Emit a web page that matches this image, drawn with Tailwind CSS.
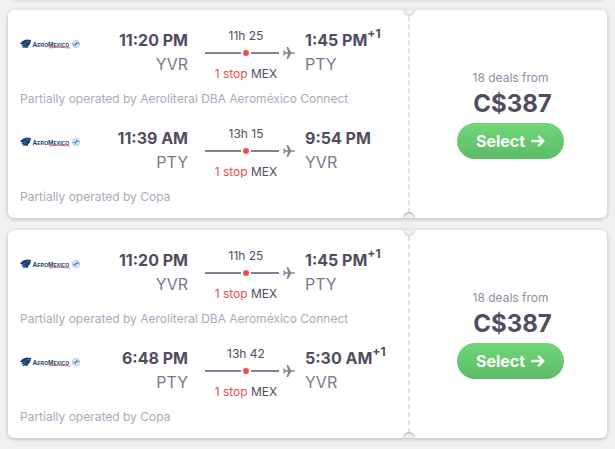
<!DOCTYPE html>
<html lang="en">
<head>
    <meta charset="UTF-8">
    <meta name="viewport" content="width=device-width, initial-scale=1.0">
    <title>Flight results</title>
    <script src="https://cdn.jsdelivr.net/npm/@tailwindcss/browser@4"></script>
</head>
<body class="bg-[#f1f1f3] px-2 pb-2.5 font-['Inter',sans-serif] text-[#524c61]">
    <!-- Shared icons -->
    <svg class="hidden" aria-hidden="true">
        <symbol id="aeromexico" viewBox="0 0 60 12">
            <path d="M0 5.500 2 3.500 4 2.200 7 1.600 11 2 10.600 4.600 9.600 6.800 8.200 8 7.600 10 5 9.600 2.400 10 3.400 8.600 1.200 8 2.600 6.800Z" fill="#173f73"/>
            <path d="M2 7 5.500 5.200M3 8.800 6 6.800M6 4 9.800 3.400" stroke="#6f94bd" stroke-width=".6" fill="none"/>
            <text x="12.500" y="8.500" fill="#173f73" font-family="Liberation Sans, sans-serif" font-weight="700" font-size="5"><tspan font-size="6.500">A</tspan>ERO<tspan font-size="6.500">M</tspan>EXICO</text>
            <path d="M29 9.900Q38 8.500 50 10" stroke="#e8696c" stroke-width="1" fill="none"/>
            <circle cx="56" cy="6" r="3.500" fill="#e6f0f8" stroke="#8fb4d6" stroke-width=".8"/>
            <path d="M53.500 6.500 58.800 5M55 8.200 57 4" stroke="#3c78b4" stroke-width="1" fill="none"/>
        </symbol>
        <symbol id="plane" viewBox="0 0 12 12">
            <path d="M0 3.500h1.200L2.600 5.300H5L3.600 0h1.500L8 5.300h2.800q1.200.2 1.200.7t-1.200.7H8L5.100 12H3.600L5 6.700H2.600L1.200 8.500H0L.8 6Z" fill="#857f95"/>
        </symbol>
        <symbol id="arrow" viewBox="0 0 14 12">
            <path d="M1.200 6h11M7.800 1.500 12.400 6 7.800 10.500" fill="none" stroke="#fff" stroke-width="2.400" stroke-linecap="round" stroke-linejoin="round"/>
        </symbol>
    </svg>

    <!-- End of the previous result -->
    <div class="-mt-2.5 h-2 mb-3 bg-white rounded-b-md shadow-[0_1px_4px_rgba(0,0,0,0.25)]"></div>

    <main class="space-y-3">
        <article class="rounded-md shadow-[0_1px_4px_rgba(0,0,0,0.25)]">
            <div class="flex rounded-md bg-white overflow-hidden">
                <div class="flex-1 min-w-0 px-3 pb-3">
                    <section class="pt-4">
                        <div class="flex items-start">
                            <svg class="w-15 h-3 mt-3 shrink-0" role="img" aria-label="Aeromexico"><use href="#aeromexico"/></svg>
                            <div class="flex-1 pt-0.5 text-right text-base leading-6">
                                <p class="font-bold">11:20 PM</p>
                                <p class="text-[#7c768c]">YVR</p>
                            </div>
                            <div class="w-[90px] ml-[17px] mr-2.5 text-xs leading-5 text-center">
                                <p class="pr-2">11h 25</p>
                                <div class="flex items-center h-3.5">
                                    <span class="w-9 h-0.5 bg-[#857f95]"></span>
                                    <span class="size-1.5 mx-0.5 rounded-full bg-[#eb4f50]"></span>
                                    <span class="flex-1 h-0.5 bg-[#857f95]"></span>
                                    <svg class="size-3 ml-1"><use href="#plane"/></svg>
                                </div>
                                <p class="mt-1 pr-2"><span class="text-[#eb4f50]">1 stop</span> MEX</p>
                            </div>
                            <div class="w-[91px] pt-0.5 text-base leading-6">
                                <p class="font-bold whitespace-nowrap">1:45 PM<sup class="text-xs -top-2">+1</sup></p>
                                <p class="text-[#7c768c]">PTY</p>
                            </div>
                        </div>
                        <p class="mt-1.5 text-xs leading-[18px] text-[#aca8b9]">Partially operated by Aeroliteral DBA Aeroméxico Connect</p>
                    </section>
                    <section class="pt-4">
                        <div class="flex items-start">
                            <svg class="w-15 h-3 mt-3 shrink-0" role="img" aria-label="Aeromexico"><use href="#aeromexico"/></svg>
                            <div class="flex-1 pt-0.5 text-right text-base leading-6">
                                <p class="font-bold">11:39 AM</p>
                                <p class="text-[#7c768c]">PTY</p>
                            </div>
                            <div class="w-[90px] ml-[17px] mr-2.5 text-xs leading-5 text-center">
                                <p class="pr-2">13h 15</p>
                                <div class="flex items-center h-3.5">
                                    <span class="w-9 h-0.5 bg-[#857f95]"></span>
                                    <span class="size-1.5 mx-0.5 rounded-full bg-[#eb4f50]"></span>
                                    <span class="flex-1 h-0.5 bg-[#857f95]"></span>
                                    <svg class="size-3 ml-1"><use href="#plane"/></svg>
                                </div>
                                <p class="mt-1 pr-2"><span class="text-[#eb4f50]">1 stop</span> MEX</p>
                            </div>
                            <div class="w-[91px] pt-0.5 text-base leading-6">
                                <p class="font-bold whitespace-nowrap">9:54 PM</p>
                                <p class="text-[#7c768c]">YVR</p>
                            </div>
                        </div>
                        <p class="mt-1.5 text-xs leading-[18px] text-[#aca8b9]">Partially operated by Copa</p>
                    </section>
                </div>
                <!-- Perforated edge -->
                <div class="relative w-0.5 bg-[repeating-linear-gradient(#e1dfe8_0_3px,transparent_3px_6px,#e1dfe8_6px_8px)]">
                    <span class="absolute -top-1.5 -left-[5px] size-3 rounded-full bg-[#f1f1f3] shadow-[inset_0_-1px_2px_rgba(0,0,0,0.15)]"></span>
                    <span class="absolute -bottom-1.5 -left-[5px] size-3 rounded-full bg-[#f1f1f3] shadow-[inset_0_1px_2px_rgba(0,0,0,0.3)]"></span>
                </div>
                <div class="w-[197px] pl-1 pt-px flex flex-col items-center justify-center">
                    <p class="text-xs leading-4 text-[#918c9f]">18 deals from</p>
                    <p class="mt-1 mb-[5px] pl-1 text-2xl leading-7 font-bold">C$387</p>
                    <button type="button" class="flex items-center gap-1.5 h-9 px-[19px] rounded-full bg-linear-to-b from-[#70d778] to-[#5dbb68] text-base font-bold text-white">Select <svg class="w-3.5 h-3"><use href="#arrow"/></svg></button>
                </div>
            </div>
        </article>

        <article class="rounded-md shadow-[0_1px_4px_rgba(0,0,0,0.25)]">
            <div class="flex rounded-md bg-white overflow-hidden">
                <div class="flex-1 min-w-0 px-3 pb-3">
                    <section class="pt-4">
                        <div class="flex items-start">
                            <svg class="w-15 h-3 mt-3 shrink-0" role="img" aria-label="Aeromexico"><use href="#aeromexico"/></svg>
                            <div class="flex-1 pt-0.5 text-right text-base leading-6">
                                <p class="font-bold">11:20 PM</p>
                                <p class="text-[#7c768c]">YVR</p>
                            </div>
                            <div class="w-[90px] ml-[17px] mr-2.5 text-xs leading-5 text-center">
                                <p class="pr-2">11h 25</p>
                                <div class="flex items-center h-3.5">
                                    <span class="w-9 h-0.5 bg-[#857f95]"></span>
                                    <span class="size-1.5 mx-0.5 rounded-full bg-[#eb4f50]"></span>
                                    <span class="flex-1 h-0.5 bg-[#857f95]"></span>
                                    <svg class="size-3 ml-1"><use href="#plane"/></svg>
                                </div>
                                <p class="mt-1 pr-2"><span class="text-[#eb4f50]">1 stop</span> MEX</p>
                            </div>
                            <div class="w-[91px] pt-0.5 text-base leading-6">
                                <p class="font-bold whitespace-nowrap">1:45 PM<sup class="text-xs -top-2">+1</sup></p>
                                <p class="text-[#7c768c]">PTY</p>
                            </div>
                        </div>
                        <p class="mt-1.5 text-xs leading-[18px] text-[#aca8b9]">Partially operated by Aeroliteral DBA Aeroméxico Connect</p>
                    </section>
                    <section class="pt-4">
                        <div class="flex items-start">
                            <svg class="w-15 h-3 mt-3 shrink-0" role="img" aria-label="Aeromexico"><use href="#aeromexico"/></svg>
                            <div class="flex-1 pt-0.5 text-right text-base leading-6">
                                <p class="font-bold">6:48 PM</p>
                                <p class="text-[#7c768c]">PTY</p>
                            </div>
                            <div class="w-[90px] ml-[17px] mr-2.5 text-xs leading-5 text-center">
                                <p class="pr-2">13h 42</p>
                                <div class="flex items-center h-3.5">
                                    <span class="w-9 h-0.5 bg-[#857f95]"></span>
                                    <span class="size-1.5 mx-0.5 rounded-full bg-[#eb4f50]"></span>
                                    <span class="flex-1 h-0.5 bg-[#857f95]"></span>
                                    <svg class="size-3 ml-1"><use href="#plane"/></svg>
                                </div>
                                <p class="mt-1 pr-2"><span class="text-[#eb4f50]">1 stop</span> MEX</p>
                            </div>
                            <div class="w-[91px] pt-0.5 text-base leading-6">
                                <p class="font-bold whitespace-nowrap">5:30 AM<sup class="text-xs -top-2">+1</sup></p>
                                <p class="text-[#7c768c]">YVR</p>
                            </div>
                        </div>
                        <p class="mt-1.5 text-xs leading-[18px] text-[#aca8b9]">Partially operated by Copa</p>
                    </section>
                </div>
                <!-- Perforated edge -->
                <div class="relative w-0.5 bg-[repeating-linear-gradient(#e1dfe8_0_3px,transparent_3px_6px,#e1dfe8_6px_8px)]">
                    <span class="absolute -top-1.5 -left-[5px] size-3 rounded-full bg-[#f1f1f3] shadow-[inset_0_-1px_2px_rgba(0,0,0,0.15)]"></span>
                    <span class="absolute -bottom-1.5 -left-[5px] size-3 rounded-full bg-[#f1f1f3] shadow-[inset_0_1px_2px_rgba(0,0,0,0.3)]"></span>
                </div>
                <div class="w-[197px] pl-1 pt-px flex flex-col items-center justify-center">
                    <p class="text-xs leading-4 text-[#918c9f]">18 deals from</p>
                    <p class="mt-1 mb-[5px] pl-1 text-2xl leading-7 font-bold">C$387</p>
                    <button type="button" class="flex items-center gap-1.5 h-9 px-[19px] rounded-full bg-linear-to-b from-[#70d778] to-[#5dbb68] text-base font-bold text-white">Select <svg class="w-3.5 h-3"><use href="#arrow"/></svg></button>
                </div>
            </div>
        </article>
    </main>
</body>
</html>
